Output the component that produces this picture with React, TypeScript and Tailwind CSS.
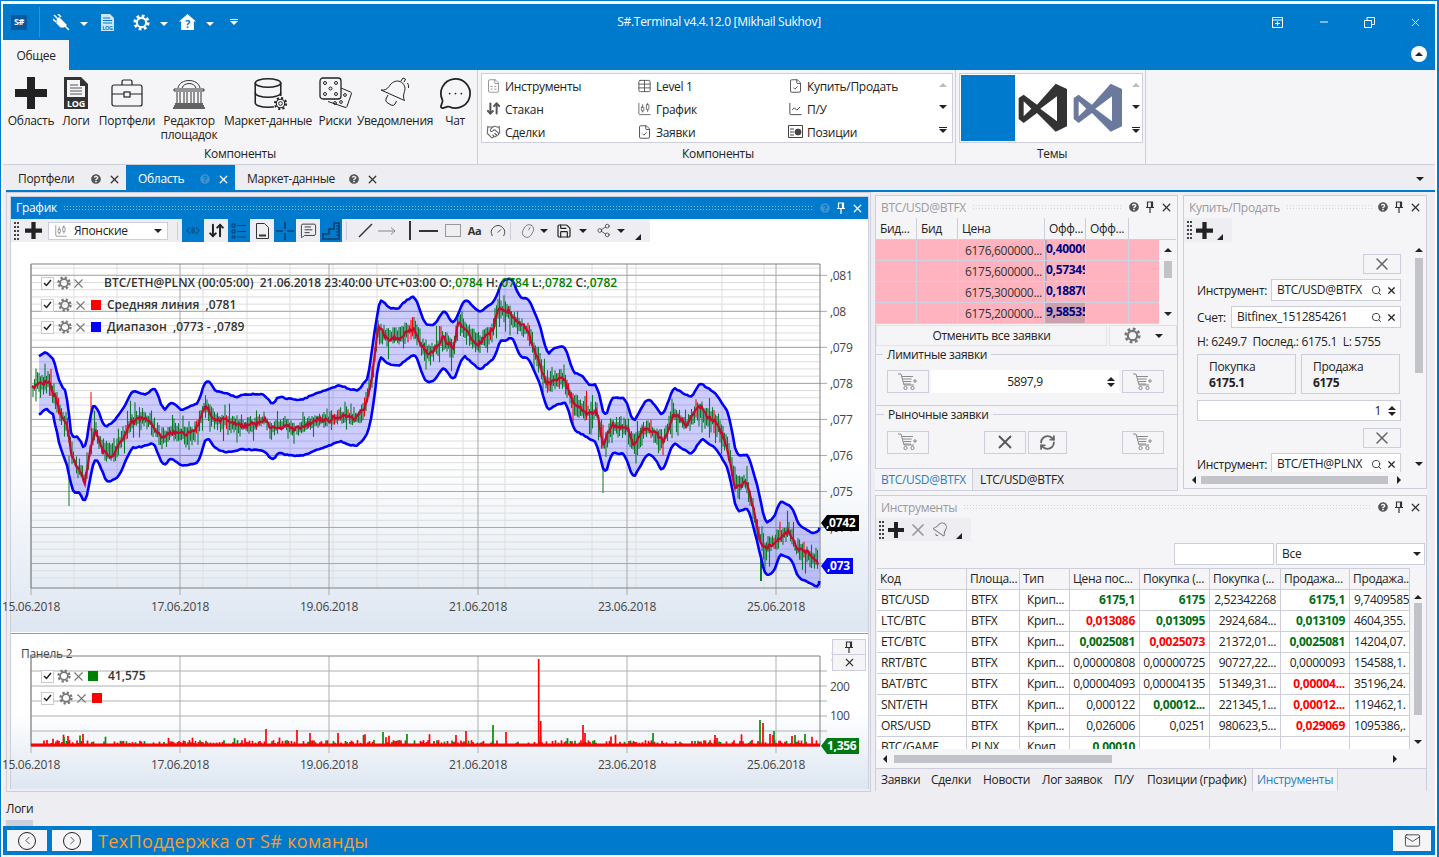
import {
  ArrowDownUp,
  Bell,
  ChartCandlestick,
  ChartLine,
  ChevronLeft,
  ChevronRight,
  Database,
  FileCheck,
  FileSpreadsheet,
  Gauge,
  Handshake,
  Mail,
  MessageCircleMore,
  MessageSquareText,
  Minus,
  Mouse,
  RefreshCw,
  Save,
  Search,
  Share2,
  Table,
  X,
} from 'lucide-react';
import { FaQuestionCircle } from 'react-icons/fa';
import type { ReactNode } from 'react';

const BLUE = '#007acc';

// chart outlines were read from 3x crops: [crop x, crop y, ...], origin per crop
const fromCrop = (ox: number, oy: number, p: number[]) => {
  const out: [number, number][] = [];
  for (let i = 0; i < p.length; i += 2) out.push([ox + p[i] / 3, oy + p[i + 1] / 3]);
  return out;
};

const upperRaw = [
  ...fromCrop(25, 255, [42, 305, 55, 290, 68, 290, 90, 318, 100, 370, 115, 400, 128, 408, 135, 545, 150, 540, 165, 548, 180, 590, 200, 450, 215, 450, 238, 515, 265, 498, 300, 450, 322, 403, 365, 417, 390, 392, 415, 465, 440, 437, 470, 463, 520, 440, 540, 375, 555, 375, 570, 405, 600, 410, 635, 425, 650, 415, 715, 415, 745, 447, 760, 420, 785, 428, 830, 432, 855, 420, 895, 405, 945, 387, 975, 400, 1000, 403, 1030, 365, 1045, 250, 1065, 125, 1090, 155, 1120, 160, 1140, 135, 1170, 120, 1200, 205]),
  ...fromCrop(430, 255, [0, 208, 15, 205, 42, 160, 70, 205, 105, 127, 150, 170, 175, 150, 195, 135, 215, 75, 245, 65, 270, 125, 298, 130, 330, 210, 352, 295, 380, 272, 405, 270, 430, 350, 455, 358, 480, 390, 500, 385, 525, 490, 545, 425, 585, 425, 610, 500, 650, 428, 670, 440, 698, 482, 730, 395, 785, 425, 810, 380, 860, 415, 895, 470, 920, 600, 955, 595, 985, 700, 1005, 800, 1030, 790, 1050, 735, 1085, 750, 1105, 805, 1145, 832, 1165, 830, 1168, 815]),
];

const lowerRaw = [
  ...fromCrop(25, 255, [42, 480, 62, 457, 90, 480, 95, 540, 130, 640, 140, 700, 155, 715, 165, 705, 180, 750, 195, 670, 210, 600, 230, 640, 245, 680, 280, 665, 320, 575, 350, 573, 385, 560, 415, 630, 440, 605, 470, 630, 520, 620, 545, 540, 570, 575, 600, 590, 650, 580, 715, 583, 745, 615, 760, 590, 785, 597, 830, 600, 855, 590, 895, 575, 945, 555, 975, 568, 1000, 568, 1030, 530, 1045, 450, 1062, 300, 1090, 325, 1120, 330, 1170, 292, 1200, 375]),
  ...fromCrop(430, 255, [0, 380, 15, 370, 42, 333, 70, 375, 100, 297, 150, 343, 175, 320, 195, 305, 210, 250, 230, 255, 245, 240, 270, 300, 298, 310, 330, 385, 352, 465, 380, 445, 410, 440, 430, 520, 465, 540, 500, 560, 525, 660, 545, 590, 585, 595, 610, 668, 650, 595, 670, 600, 698, 648, 730, 560, 785, 595, 815, 547, 860, 580, 895, 640, 920, 767, 955, 755, 985, 870, 1005, 960, 1030, 950, 1050, 893, 1085, 910, 1105, 965, 1145, 985, 1165, 995, 1168, 975]),
];

const middle = [
  ...fromCrop(25, 255, [20, 400, 40, 380, 70, 380, 90, 420, 105, 470, 125, 500, 140, 600, 160, 640, 180, 670, 195, 580, 210, 525, 240, 590, 265, 595, 290, 555, 320, 495, 370, 490, 395, 530, 410, 550, 440, 525, 480, 540, 510, 530, 540, 450, 570, 490, 620, 500, 680, 510, 720, 490, 740, 520, 770, 505, 820, 520, 860, 500, 905, 490, 960, 475, 990, 490, 1020, 450, 1040, 370, 1060, 220, 1085, 245, 1130, 245, 1165, 210, 1190, 270, 1210, 295]),
  ...fromCrop(430, 255, [0, 295, 40, 250, 70, 285, 85, 200, 145, 265, 190, 220, 205, 160, 235, 165, 260, 205, 295, 225, 320, 300, 350, 385, 395, 355, 430, 440, 470, 470, 500, 470, 520, 570, 545, 510, 590, 515, 610, 570, 650, 515, 700, 555, 730, 475, 770, 505, 805, 455, 860, 505, 890, 560, 915, 680, 950, 680, 990, 850, 1010, 880, 1050, 840, 1075, 820, 1100, 880, 1165, 915]),
];

const toPoints = (p: [number, number][]) => p.map(([x, y]) => `${x.toFixed(1)},${y.toFixed(1)}`).join(' ');

const yAt = (p: [number, number][], x: number) => {
  for (let i = 1; i < p.length; i++) {
    if (x <= p[i][0]) {
      const t = (x - p[i - 1][0]) / Math.max(p[i][0] - p[i - 1][0], 0.01);
      return p[i - 1][1] + t * (p[i][1] - p[i - 1][1]);
    }
  }
  return p[p.length - 1][1];
};

// resample, average a little and wobble so the band looks like a computed indicator
const smooth = (p: [number, number][], seed: number) => {
  const rnd = seeded(seed);
  const out: [number, number][] = [];
  const first = p[0][0];
  const last = p[p.length - 1][0];
  for (let x = first; x <= last; x += 2) {
    const a = yAt(p, Math.max(x - 1.5, first));
    const b = yAt(p, Math.min(x + 1.5, last));
    out.push([x, (a + b) / 2 + (rnd() - 0.5) * 1.1]);
  }
  out.push([last, p[p.length - 1][1]]);
  return out;
};

function seeded(s: number) {
  return () => {
    s = (s * 16807) % 2147483647;
    return s / 2147483647;
  };
}

const upper = smooth(upperRaw, 31);
const lower = smooth(lowerRaw, 77);

const candles = (() => {
  const rnd = seeded(4711);
  const out: { x: number; a: number; b: number; c: string }[] = [];
  for (let x = 33; x < 819; x += 1.5) {
    const y = yAt(middle, x);
    const calm = x > 240 && x < 360 ? 0.7 : 1;
    const a = (3 + rnd() * 9 * (rnd() > 0.75 ? 2.2 : 1)) * calm;
    const b = (3 + rnd() * 9 * (rnd() > 0.75 ? 2.2 : 1)) * calm;
    out.push({ x, a: y - a, b: y + b, c: rnd() > 0.1 ? '#0b7a2a' : '#ff0000' });
  }
  return out;
})();

const midNoisy = (() => {
  const rnd = seeded(99);
  const out: [number, number][] = [];
  let drift = 0;
  for (let x = 32; x < 819; x += 1.2) {
    drift = drift * 0.8 + (rnd() - 0.5) * 3;
    out.push([x, yAt(middle, x) + drift + (rnd() - 0.5) * 3]);
  }
  return out;
})();

const volBars = (() => {
  const rnd = seeded(2024);
  const out: { x: number; top: number; c: string }[] = [];
  for (let x = 32; x < 819; x += 1.5) {
    const r = rnd();
    const h = r > 0.96 ? 5 + rnd() * 5 : r > 0.45 ? 1 + rnd() * 3 : 0;
    if (h > 0) out.push({ x, top: 743 - h, c: rnd() > 0.72 ? '#0a8a0a' : '#ff0000' });
  }
  const spikes: [number, number, string][] = [
    [538.7, 658, '#ff0000'], [540.7, 720, '#ff0000'], [493, 724, '#0a8a0a'], [506, 731, '#ff0000'], [456, 734, '#ff0000'],
    [466, 730, '#ff0000'], [583, 724, '#ff0000'], [585, 732, '#ff0000'], [653, 732, '#0a8a0a'], [760, 719, '#0a8a0a'],
    [763, 722, '#ff0000'], [774, 730, '#0a8a0a'], [792, 735, '#ff0000'], [795, 734, '#0a8a0a'], [805, 733, '#0a8a0a'],
    [266, 728, '#ff0000'], [297, 729, '#ff0000'], [310, 732, '#ff0000'], [338, 732, '#ff0000'], [83, 733, '#ff0000'],
    [383, 731, '#0a8a0a'], [64, 736, '#0a8a0a'], [68, 735, '#ff0000'], [715, 734, '#ff0000'], [717, 737, '#ff0000'],
  ];
  spikes.forEach(([x, top, c]) => out.push({ x, top, c }));
  return out;
})();

const dateTicks = [
  [31, '15.06.2018'],
  [180, '17.06.2018'],
  [329, '19.06.2018'],
  [478, '21.06.2018'],
  [627, '23.06.2018'],
  [776, '25.06.2018'],
] as const;

const minorX = [74, 117, 203, 247, 290, 333, 377, 418, 463, 505, 592, 636, 722, 764];

function Caret({ color = 'border-t-[#222]' }: { color?: string }) {
  return <span className={`inline-block h-0 w-0 border-x-4 border-t-4 border-x-transparent ${color}`} />;
}

function CaretUp({ muted }: { muted?: boolean }) {
  return <span className={`inline-block h-0 w-0 border-x-4 border-b-4 border-x-transparent ${muted ? 'border-b-[#bbb]' : 'border-b-[#222]'}`} />;
}

function Grip({ h = 'h-[18px]' }: { h?: string }) {
  return <span className={`ml-[3px] w-[5px] shrink-0 border-x-2 border-dotted border-[#444] ${h}`} />;
}

function Corner({ cls = '' }: { cls?: string }) {
  return <span className={`h-0 w-0 self-end border-b-[6px] border-l-[6px] border-b-[#222] border-l-transparent ${cls}`} />;
}

function PlusIcon({ size = 18 }: { size?: number }) {
  return (
    <svg width={size} height={size} viewBox="0 0 16 16" className="shrink-0">
      <path d="M6 0h4v6h6v4h-6v6H6v-6H0V6h6z" fill="#222" />
    </svg>
  );
}

function Pin({ color = '#333' }: { color?: string }) {
  return (
    <svg width="8" height="12" viewBox="0 0 8 12" fill="none" stroke={color} strokeWidth="1.2">
      <path d="M1.5 1h5v5.5h-5zM5.5 1v5.5M0 6.5h8M4 6.5V12" />
    </svg>
  );
}

// chunky cog: ring plus dashed ring for the teeth
function Gear({ size = 15, color = '#777' }: { size?: number; color?: string }) {
  return (
    <svg width={size} height={size} viewBox="0 0 16 16" fill="none" stroke={color} className="shrink-0">
      <circle cx="8" cy="8" r="4.4" strokeWidth="2" />
      <circle cx="8" cy="8" r="6.3" strokeWidth="2.6" strokeDasharray="2.6 2.35" />
    </svg>
  );
}

function PanelHead({ title, active }: { title: string; active?: boolean }) {
  return (
    <div className={`flex h-[22px] shrink-0 items-center pr-[4px] pl-[5px] ${active ? 'bg-[#007acc] text-white' : 'text-[#9a9aa0]'}`}>
      <span className={active ? '' : 'pt-px'}>{title}</span>
      <span className={`mx-[6px] h-[6px] flex-1 bg-[length:3px_3px] ${active ? 'bg-[radial-gradient(#7cc0ea_1px,transparent_1px)]' : 'bg-[radial-gradient(#d4d5de_1px,transparent_1px)]'}`} />
      <FaQuestionCircle size={10} color={active ? '#3d93cf' : '#555'} className="mr-[7px]" />
      <span className="mr-[6px] flex"><Pin color={active ? '#fff' : '#333'} /></span>
      <X size={13} strokeWidth={2.4} color={active ? '#fff' : '#333'} />
    </div>
  );
}

function BigButton({ w, label, icon }: { w: string; label: ReactNode; icon: ReactNode }) {
  return (
    <div className={`flex shrink-0 flex-col items-center ${w}`}>
      <div className="flex h-[40px] items-center justify-center">{icon}</div>
      <div className="mt-px text-center leading-[14px] whitespace-nowrap">{label}</div>
    </div>
  );
}

function GalleryItem({ icon, label }: { icon: ReactNode; label: string }) {
  return (
    <div className="flex h-[23px] items-center gap-[4px]">
      <span className="flex w-[15px] justify-center text-[#666]">{icon}</span>
      <span className="pt-[2px]">{label}</span>
    </div>
  );
}

function ScrollArrows() {
  return (
    <div className="flex h-full flex-col items-center justify-between py-[9px]">
      <CaretUp muted />
      <Caret />
      <span className="flex flex-col items-center gap-[1px]">
        <span className="h-[1px] w-[8px] bg-[#222]" />
        <Caret />
      </span>
    </div>
  );
}

function VSLogo({ color }: { color: string }) {
  return (
    <svg width="50" height="50" viewBox="205 250 150 150">
      <path
        fill={color}
        fillRule="evenodd"
        d="M207 295 222 285 262 315 318 252 352 268V380L318 396 262 340 222 370 207 358ZM322 290 272 327 322 365ZM222 305V350L245 327Z"
      />
    </svg>
  );
}

function DocTab({ label, w, active }: { label: string; w: string; active?: boolean }) {
  return (
    <div className={`flex h-full items-center pl-[12px] ${w} ${active ? 'bg-[#007acc] text-white' : 'text-[#222]'}`}>
      <span className="flex-1 pt-[3px]">{label}</span>
      <FaQuestionCircle size={10} color={active ? '#3d93cf' : '#555'} className="mt-[3px] mr-[7px]" />
      <X size={13} strokeWidth={2.4} color={active ? '#fff' : '#333'} className="mt-[3px] mr-[5px]" />
    </div>
  );
}

function LegendBox() {
  return (
    <span className="flex h-[13px] w-[13px] shrink-0 items-center justify-center border border-[#c9cad8] bg-white">
      <svg width="9" height="8" viewBox="0 0 9 8" fill="none" stroke="#222" strokeWidth="1.5">
        <path d="M1 4l2.5 2.5L8 1" />
      </svg>
    </span>
  );
}

function LegendX() {
  return <X size={15} strokeWidth={1.7} color="#777" className="shrink-0" />;
}

function ToolBtn({ w, active, children }: { w: string; active?: boolean; children: ReactNode }) {
  return <span className={`flex h-[23px] shrink-0 items-center justify-center ${w} ${active ? 'bg-[#007acc]' : ''}`}>{children}</span>;
}

function Sep() {
  return <span className="mx-[4px] h-[18px] w-px shrink-0 bg-[#cccedb]" />;
}

function MainChart() {
  const majors = Array.from({ length: 9 }, (_, i) => 274.3 + i * 36.03);
  const minors = Array.from({ length: 44 }, (_, i) => 267.1 + i * 7.206).filter(y => y < 587);
  const axis = [',081', ',08', ',079', ',078', ',077', ',076', ',075', ',074'];
  return (
    <svg viewBox="11 241 858 390" className="block h-[390px] w-[858px] overflow-visible">
      {minors.map(y => <line key={y} x1="31" x2="820" y1={y} y2={y} stroke="#dcdcdc" />)}
      {minorX.map(x => <line key={x} x1={x} x2={x} y1="263" y2="587" stroke="#dedede" />)}
      {majors.map(y => <line key={y} x1="31" x2="827" y1={y} y2={y} stroke="#a8a8a8" />)}
      {dateTicks.map(([x]) => <line key={x} x1={x} x2={x} y1="263" y2="594" stroke="#a8a8a8" />)}
      <path d="M31 263H820V587H31Z" fill="none" stroke="#808080" />
      <polygon points={toPoints([...upper, ...[...lower].reverse()])} fill="#0000ff" fillOpacity="0.2" />
      {candles.map(c => <line key={c.x} x1={c.x} x2={c.x} y1={c.a} y2={c.b} stroke={c.c} strokeWidth="1.1" />)}
      <line x1="69" x2="69" y1="455" y2="505" stroke="#0b7a2a" />
      <line x1="91" x2="91" y1="391" y2="430" stroke="#ff0000" />
      <line x1="603" x2="603" y1="465" y2="492" stroke="#0b7a2a" />
      <line x1="761" x2="761" y1="555" y2="580" stroke="#0b7a2a" strokeWidth="2" />
      <polyline points={toPoints(midNoisy)} fill="none" stroke="#c8082f" strokeWidth="2.2" />
      <polyline points={toPoints(upper)} fill="none" stroke="#0000ff" strokeWidth="2.6" strokeLinejoin="round" />
      <polyline points={toPoints(lower)} fill="none" stroke="#0000ff" strokeWidth="2.6" strokeLinejoin="round" />
      {axis.map((t, i) => <text key={t} x="830" y={majors[i] + 4.5} fontSize="12" fill="#444">{t}</text>)}
      {dateTicks.map(([x, t]) => <text key={x} x={x} y="610" textAnchor="middle" fontSize="12" fill="#444">{t}</text>)}
      <path d="M827 514H859V530H827L821 522Z" fill="#000" />
      <text x="826" y="526" fontSize="12" fontWeight="700" fill="#fff">,0742</text>
      <path d="M827 557H853V573H827L821 565Z" fill="#0000ff" />
      <text x="827" y="569" fontSize="12" fontWeight="700" fill="#fff">,073</text>
    </svg>
  );
}

function VolumeChart() {
  const lines = [670, 685, 700, 715, 730];
  return (
    <svg viewBox="11 634 858 154" className="block h-[154px] w-[858px] overflow-visible">
      <text x="21" y="657" fontSize="12" fill="#444">Панель 2</text>
      {lines.map(y => <line key={y} x1="31" x2="827" y1={y} y2={y} stroke="#b0b0b0" />)}
      {dateTicks.map(([x]) => <line key={x} x1={x} x2={x} y1="655" y2="752" stroke="#b0b0b0" />)}
      <path d="M31 655H820V745H31Z" fill="none" stroke="#808080" />
      {volBars.map((b, i) => <line key={i} x1={b.x} x2={b.x} y1={b.top} y2="745" stroke={b.c} strokeWidth="1.7" />)}
      <line x1="31" x2="820" y1="744" y2="744" stroke="#ff0000" strokeWidth="3" />
      <text x="831" y="660" fontSize="12" fill="#444">3</text>
      <text x="830" y="690" fontSize="12" fill="#444">200</text>
      <text x="830" y="719" fontSize="12" fill="#444">100</text>
      {dateTicks.map(([x, t]) => <text key={x} x={x} y="768" textAnchor="middle" fontSize="12" fill="#444">{t}</text>)}
      <path d="M827 737H859V753H827L821 745Z" fill="#007a10" />
      <text x="827" y="749" fontSize="12" fontWeight="700" fill="#fff">1,356</text>
    </svg>
  );
}

const orderRows = [
  ['6176,600000...', '0,40000', 'w-[2px]'],
  ['6175,600000...', '0,57349', 'w-[2px]'],
  ['6175,300000...', '0,18870', 'w-[1px]'],
  ['6175,200000...', '9,58535', 'w-full'],
];

function OrderBook() {
  return (
    <div className="flex shrink-0">
      <div className="flex w-[300px] flex-col">
        <div className="grid h-[22px] w-[300px] grid-cols-[41px_41px_87px_41px_43px_30px] items-center border-b border-[#cccedb]">
          {['Бид...', 'Бид', 'Цена', 'Офф...', 'Офф...', ''].map((t, i) => (
            <span key={i} className="flex h-full items-center border-r border-[#cccedb] pl-[4px] last:border-r-0">{t}</span>
          ))}
        </div>
        <div className="flex">
          <div className="w-[283px]">
            {orderRows.map(([price, vol, bar]) => (
              <div key={price} className="grid h-[21px] grid-cols-[41px_41px_87px_41px_43px_30px] border-b border-[#cfd2e0] bg-[#ffb3be]">
                <span className="border-r border-[#cfd2e0]" />
                <span className="border-r border-[#cfd2e0]" />
                <span className="truncate border-r border-[#cfd2e0] pt-[3px] pl-[7px] text-[#333]">{price}</span>
                <span className="relative overflow-hidden border-r border-[#cfd2e0] pt-px pl-[1px] font-bold whitespace-nowrap text-[#000080]">
                  <span className={`absolute inset-y-0 left-0 bg-[#9a8f9c]/50 ${bar}`} />
                  <span className="relative">{vol}</span>
                </span>
                <span className="border-r border-[#cfd2e0]" />
                <span />
              </div>
            ))}
          </div>
          <div className="flex w-[17px] flex-col items-center justify-between py-[8px]">
            <CaretUp />
            <span className="-mt-[26px] h-[17px] w-[8px] bg-[#c2c3c9]" />
            <Caret />
          </div>
        </div>
      </div>
    </div>
  );
}

function FlatBtn({ w, children }: { w: string; children: ReactNode }) {
  return <span className={`flex h-[23px] shrink-0 items-center justify-center border border-[#cccedb] ${w}`}>{children}</span>;
}

function Cart() {
  return (
    <svg width="21" height="18" viewBox="0 0 21 18" fill="none" stroke="#8a8a8a" strokeWidth="1">
      <path d="M0 1h3l3 11h10" />
      <path d="M4 3.5h11M4.7 6h9M5.3 8.5h8M6 11h7" />
      <circle cx="7.5" cy="15" r="1.6" />
      <circle cx="14.5" cy="15" r="1.6" />
      <path d="M17 6v4M15 8h4" />
    </svg>
  );
}

function BookPanel() {
  return (
    <div className="flex h-[296px] w-[303px] shrink-0 flex-col">
      <div className="flex flex-1 flex-col border-x border-t border-[#cccedb]">
        <PanelHead title="BTC/USD@BTFX" />
        <OrderBook />
        <div className="mt-[1px] flex h-[21px] gap-[2px]">
          <span className="flex w-[231px] items-center justify-center border border-[#e3e3ea]">Отменить все заявки</span>
          <span className="flex flex-1 items-center justify-center gap-[14px] border border-[#dfe0e8]">
            <Gear size={17} />
            <Caret />
          </span>
        </div>
        <div className="relative mt-[8px] flex h-[52px] items-center gap-[2px] border-y border-[#cccedb] px-[11px] pt-[3px]">
          <span className="absolute -top-[8px] left-[7px] bg-[#f5f5f8] px-[4px] leading-[16px]">Лимитные заявки</span>
          <FlatBtn w="w-[42px]"><Cart /></FlatBtn>
          <span className="relative flex h-[23px] w-[188px] items-center justify-center bg-white">
            5897,9
            <span className="absolute right-[4px] flex flex-col gap-[2px]"><CaretUp /><Caret /></span>
          </span>
          <FlatBtn w="ml-[1px] w-[42px]"><Cart /></FlatBtn>
        </div>
        <div className="relative mt-[8px] flex h-[52px] items-center border-t border-[#cccedb] px-[11px] pt-[3px]">
          <span className="absolute -top-[8px] left-[8px] bg-[#f5f5f8] px-[4px] leading-[16px]">Рыночные заявки</span>
          <FlatBtn w="w-[42px]"><Cart /></FlatBtn>
          <span className="ml-[55px] flex gap-[2px]">
            <FlatBtn w="w-[42px]"><X size={22} strokeWidth={2} color="#555" /></FlatBtn>
            <FlatBtn w="w-[39px]"><RefreshCw size={17} strokeWidth={2.6} color="#666" /></FlatBtn>
          </span>
          <FlatBtn w="ml-[55px] w-[42px]"><Cart /></FlatBtn>
        </div>
      </div>
      <div className="flex h-[23px] shrink-0 border-y border-r border-[#cccedb] bg-[#eeeef2]">
        <span className="flex w-[97px] items-center justify-center bg-[#f5f5f8] text-[#2a7fc1]">BTC/USD@BTFX</span>
        <span className="flex items-center border-l border-[#cccedb] px-[7px]">LTC/USD@BTFX</span>
      </div>
    </div>
  );
}

function LookupInput({ w, value }: { w: string; value: string }) {
  return (
    <span className={`flex h-[22px] items-center border border-[#cccedb] bg-white pr-[3px] pl-[5px] ${w}`}>
      <span className="flex-1 whitespace-nowrap">{value}</span>
      <Search size={11} strokeWidth={2} className="mr-[4px] shrink-0 text-[#333]" />
      <X size={11} strokeWidth={2.6} className="shrink-0 text-[#222]" />
    </span>
  );
}

function CloseRow() {
  return (
    <div className="flex justify-end">
      <span className="flex h-[20px] w-[38px] items-center justify-center border border-[#cccedb]">
        <X size={20} strokeWidth={1.8} color="#666" />
      </span>
    </div>
  );
}

function BuySellPanel() {
  return (
    <div className="ml-[5px] flex h-[294px] w-[244px] shrink-0 flex-col border border-[#cccedb]">
      <PanelHead title="Купить/Продать" />
      <div className="flex h-[24px] w-[48px] shrink-0 items-center gap-[4px] bg-[#eeeef2]">
        <Grip />
        <PlusIcon size={17} />
        <Corner cls="mb-[2px]" />
      </div>
      <div className="flex min-h-0 flex-1">
        <div className="min-h-0 flex-1 overflow-hidden pt-[12px] pr-[10px] pl-[13px]">
          <CloseRow />
          <div className="mt-[5px] flex items-center justify-between">
            <span className="pt-[2px]">Инструмент:</span>
            <LookupInput w="w-[130px]" value="BTC/USD@BTFX" />
          </div>
          <div className="mt-[5px] flex items-center justify-between">
            <span className="pt-[2px]">Счет:</span>
            <LookupInput w="w-[170px]" value="Bitfinex_1512854261" />
          </div>
          <div className="mt-[6px] h-[16px] leading-[16px] whitespace-pre">H: 6249.7  Послед.: 6175.1  L: 5755</div>
          <div className="mt-[4px] flex gap-[5px]">
            <div className="h-[40px] w-[99px] border border-[#cccedb] pt-[4px] pl-[11px]">Покупка<div className="font-bold">6175.1</div></div>
            <div className="h-[40px] w-[99px] border border-[#cccedb] pt-[4px] pl-[11px]">Продажа<div className="font-bold">6175</div></div>
          </div>
          <div className="mt-[6px] flex h-[21px] items-center justify-end gap-[7px] border border-[#cccedb] bg-white pr-[4px]">
            1
            <span className="flex flex-col gap-[2px]"><CaretUp /><Caret /></span>
          </div>
          <div className="mt-[7px]"><CloseRow /></div>
          <div className="mt-[5px] flex items-center justify-between">
            <span className="pt-[2px]">Инструмент:</span>
            <LookupInput w="w-[130px]" value="BTC/ETH@PLNX" />
          </div>
        </div>
        <div className="flex w-[15px] shrink-0 flex-col items-center py-[6px]">
          <CaretUp />
          <span className="mt-[6px] h-[115px] w-[8px] bg-[#c2c3c9]" />
          <span className="flex-1" />
          <Caret />
        </div>
      </div>
      <div className="flex h-[16px] shrink-0 items-center px-[8px]">
        <span className="h-0 w-0 border-y-4 border-r-4 border-y-transparent border-r-[#222]" />
        <span className="ml-[5px] h-[8px] w-[187px] bg-[#c2c3c9]" />
        <span className="ml-[9px] h-0 w-0 border-y-4 border-l-4 border-y-transparent border-l-[#222]" />
      </div>
    </div>
  );
}

const g = 'font-bold text-[#006e12]';
const r = 'font-bold text-[#ff0000]';

const instruments: [string, string, [string, string], [string, string], string, [string, string], string][] = [
  ['BTC/USD', 'BTFX', ['6175,1', g], ['6175', g], '2,52342268', ['6175,1', g], '9,7409585'],
  ['LTC/BTC', 'BTFX', ['0,013086', r], ['0,013095', g], '2924,684...', ['0,013109', g], '4604,355.'],
  ['ETC/BTC', 'BTFX', ['0,0025081', g], ['0,0025073', r], '21372,01...', ['0,0025081', g], '14204,07.'],
  ['RRT/BTC', 'BTFX', ['0,00000808', ''], ['0,00000725', ''], '90727,22...', ['0,0000093', ''], '154588,1.'],
  ['BAT/BTC', 'BTFX', ['0,00004093', ''], ['0,00004135', ''], '51349,31...', ['0,00004...', r], '35196,24.'],
  ['SNT/ETH', 'BTFX', ['0,000122', ''], ['0,00012...', g], '221345,1...', ['0,00012...', r], '119462,1.'],
  ['ORS/USD', 'BTFX', ['0,026006', ''], ['0,0251', ''], '980623,5...', ['0,029069', r], '1095386,.'],
  ['BTC/GAME', 'PLNX', ['0,00010', g], ['', ''], '', ['', ''], ''],
];

const instCols = 'grid grid-cols-[90px_53px_50px_70px_70px_71px_69px_60px]';

function InstrumentsPanel() {
  const cell = 'overflow-hidden whitespace-nowrap border-r border-b border-[#cccedb] flex items-center';
  return (
    <div className="mt-[4px] flex h-[296px] w-[552px] shrink-0 flex-col border-x border-t border-[#cccedb]">
      <PanelHead title="Инструменты" />
      <div className="flex h-[23px] w-[95px] shrink-0 items-center gap-[4px] bg-[#eeeef2]">
        <Grip />
        <PlusIcon size={16} />
        <X size={20} strokeWidth={2} color="#999" />
        <Bell size={17} strokeWidth={1.3} color="#777" className="rotate-[35deg]" />
        <Corner cls="mb-[2px] ml-[3px]" />
      </div>
      <div className="mt-[2px] flex h-[22px] shrink-0 justify-end gap-[2px] pr-[1px]">
        <span className="w-[100px] border border-[#cccedb] bg-white" />
        <span className="flex w-[149px] items-center justify-between border border-[#cccedb] bg-white pr-[3px] pl-[5px]">Все<Caret /></span>
      </div>
      <div className={`mt-[3px] ml-px h-[22px] w-[533px] shrink-0 border-t border-[#cccedb] ${instCols}`}>
        {['Код', 'Площа...', 'Тип', 'Цена пос...', 'Покупка (...', 'Покупка (...', 'Продажа...', 'Продажа...'].map((t, i) => (
          <span key={i} className={`${cell} pl-[3px]`}>{t}</span>
        ))}
      </div>
      <div className="ml-px flex h-[159px] shrink-0 overflow-hidden">
        <div className="w-[533px]">
          {instruments.map(row => (
            <div key={row[0]} className={`h-[21px] bg-white ${instCols}`}>
              <span className={`${cell} pl-[4px]`}>{row[0]}</span>
              <span className={`${cell} pl-[4px]`}>{row[1]}</span>
              <span className={`${cell} pl-[7px]`}>Крип...</span>
              <span className={`${cell} justify-end pr-[4px] ${row[2][1]}`}>{row[2][0]}</span>
              <span className={`${cell} justify-end pr-[4px] ${row[3][1]}`}>{row[3][0]}</span>
              <span className={`${cell} justify-end pr-[4px]`}>{row[4]}</span>
              <span className={`${cell} justify-end pr-[4px] ${row[5][1]}`}>{row[5][0]}</span>
              <span className={`${cell} pl-[4px]`}>{row[6]}</span>
            </div>
          ))}
        </div>
        <div className="flex w-[16px] flex-col items-center py-[5px]">
          <CaretUp />
          <span className="mt-[4px] h-[112px] w-[8px] bg-[#c2c3c9]" />
          <span className="flex-1" />
          <Caret />
        </div>
      </div>
      <div className="flex h-[19px] shrink-0 items-center px-[7px]">
        <span className="h-0 w-0 border-y-4 border-r-4 border-y-transparent border-r-[#222]" />
        <span className="ml-[7px] h-[8px] w-[218px] bg-[#c2c3c9]" />
        <span className="mr-[22px] ml-auto h-0 w-0 border-y-4 border-l-4 border-y-transparent border-l-[#222]" />
      </div>
      <div className="flex h-[23px] shrink-0 items-center border-t border-[#cccedb] bg-[#eeeef2] pl-[5px]">
        <span className="w-[50px]">Заявки</span>
        <span className="w-[52px]">Сделки</span>
        <span className="w-[59px]">Новости</span>
        <span className="w-[72px]">Лог заявок</span>
        <span className="w-[33px]">П/У</span>
        <span className="w-[105px]">Позиции (график)</span>
        <span className="flex h-full w-[86px] items-center justify-center border-x border-[#cccedb] bg-[#f5f5f8] text-[#2a7fc1]">Инструменты</span>
      </div>
    </div>
  );
}

function SmallDoc() {
  return <FileCheck size={16} strokeWidth={1.4} color="#444" />;
}

export default function App() {
  return (
    <div className="flex h-[857px] w-[1439px] flex-col overflow-hidden border-t border-r-2 border-l border-[#007acc] bg-white pt-[3px] pr-[2px] pl-[2px] font-['Open_Sans',sans-serif] text-[12px] leading-[16px] tracking-[-0.3px] text-[#222]">
      {/* title + tab strip */}
      <div className="h-[66px] shrink-0 bg-[#007acc]">
        <div className="grid h-[36px] grid-cols-[1fr_auto_1fr] items-center">
          <div className="flex items-center">
            <span className="ml-[8px] flex h-[15px] w-[16px] items-center justify-center bg-[#045a9e] text-[9px] font-bold text-white">S#</span>
            <span className="ml-[12px] h-[30px] w-px bg-[#2f93d6]" />
            <svg width="17" height="17" viewBox="0 0 17 17" className="ml-[13px]">
              <path d="M1 1l15 15" stroke="#fff" strokeWidth="1.4" />
              <path d="M6 3l8 8-3 2.5H7.5L3.5 9.5V6z" fill="#fff" />
              <path d="M3 8L0 5M8 3L5 0" stroke="#fff" strokeWidth="1.6" />
            </svg>
            <span className="ml-[10px]"><Caret color="border-t-white" /></span>
            <svg width="13" height="17" viewBox="0 0 13 17" className="ml-[13px]">
              <path d="M0 0h9l4 4v13H0z" fill="#cfe6f6" />
              <path d="M2 4h7M2 6.5h9M2 9h9" stroke={BLUE} />
              <text x="6.5" y="15.5" textAnchor="middle" fontSize="5.5" fontWeight="700" fill={BLUE}>LOG</text>
            </svg>
            <span className="ml-[19px]"><Gear size={17} color="#fff" /></span>
            <span className="ml-[10px]"><Caret color="border-t-white" /></span>
            <svg width="17" height="16" viewBox="0 0 16 15" className="ml-[11px]">
              <path d="M8 0l8 7h-2v8H2V7H0z" fill="#fff" />
              <text x="8" y="13" textAnchor="middle" fontSize="10" fontWeight="700" fill={BLUE}>?</text>
            </svg>
            <span className="ml-[10px]"><Caret color="border-t-white" /></span>
            <span className="ml-[16px] flex flex-col items-center gap-[1px]">
              <span className="h-px w-[8px] bg-white" />
              <Caret color="border-t-white" />
            </span>
          </div>
          <span className="text-white">S#.Terminal v4.4.12.0 [Mikhail Sukhov]</span>
          <div className="flex items-center justify-end">
            <svg width="11" height="11" viewBox="0 0 11 11" fill="none" stroke="#fff">
              <path d="M.5.5h10v10H.5zM.5 3h10" />
              <path d="M3 6.5h5M5.5 4.5v4" strokeWidth="1.2" />
            </svg>
            <Minus size={12} strokeWidth={2} color="#fff" className="ml-[35px]" />
            <svg width="11" height="11" viewBox="0 0 11 11" fill="none" stroke="#fff" className="ml-[34px]">
              <path d="M.5 3.5h7v7h-7zM3 3.5v-3h7.5v7h-3" />
            </svg>
            <X size={13} strokeWidth={1.6} color="#fff" className="mr-[13px] ml-[34px]" />
          </div>
        </div>
        <div className="flex h-[30px] items-end justify-between">
          <span className="flex h-[30px] w-[66px] items-center justify-center bg-[#f5f5f8] pt-[2px]">Общее</span>
          <span className="mr-[8px] mb-[8px] flex h-[16px] w-[16px] items-center justify-center rounded-full bg-white">
            <CaretUp />
          </span>
        </div>
      </div>

      {/* ribbon */}
      <div className="flex h-[95px] shrink-0 border-b border-[#cccedb] bg-[#f5f5f8]">
        <div className="flex w-[475px] shrink-0 flex-col border-r border-[#cccedb]">
          <div className="flex h-[74px] pt-[3px] pl-[5px]">
            <BigButton w="w-[46px]" label="Область" icon={<PlusIcon size={32} />} />
            <BigButton
              w="w-[44px]"
              label="Логи"
              icon={
                <svg width="24" height="32" viewBox="0 0 24 32">
                  <path d="M0 0h17l7 7v25H0z" fill="#333" />
                  <path d="M3 3h13v6h5v11H3z" fill="#f5f5f8" />
                  <path d="M6 8h8M6 11h12M6 14h12M6 17h12" stroke="#555" />
                  <text x="12" y="29.5" textAnchor="middle" fontSize="9" fontWeight="700" fill="#fff">LOG</text>
                </svg>
              }
            />
            <BigButton
              w="w-[58px]"
              label="Портфели"
              icon={
                <svg width="32" height="28" viewBox="0 0 32 28" fill="none" stroke="#222" strokeWidth="1.2">
                  <rect x="1" y="6" width="30" height="21" rx="2" />
                  <path d="M11 6V2.5A1.5 1.5 0 0 1 12.5 1h7A1.5 1.5 0 0 1 21 2.5V6M1 15h12M19 15h12" />
                  <rect x="13" y="13" width="6" height="5" />
                </svg>
              }
            />
            <BigButton
              w="w-[66px]"
              label={<>Редактор<br />площадок</>}
              icon={
                <svg width="32" height="32" viewBox="0 0 32 32" fill="none" stroke="#333">
                  <path d="M5 11C7 1 25 1 27 11M9 11C11 5 21 5 23 11M1 12h30v2H1z" />
                  <path d="M4 15v11M7 15v11M11 15v11M14 15v11M18 15v11M21 15v11M25 15v11M28 15v11" />
                  <path d="M2 27h28M1 29h30M0 31h32" strokeWidth="1.4" />
                </svg>
              }
            />
            <BigButton
              w="w-[92px]"
              label="Маркет-данные"
              icon={
                <span className="relative flex">
                  <Database size={34} strokeWidth={1.1} color="#222" />
                  <span className="absolute -right-[3px] -bottom-px flex rounded-full bg-[#f5f5f8]">
                    <svg width="15" height="15" viewBox="0 0 16 16" fill="none" stroke="#222">
                      <circle cx="8" cy="8" r="4.5" strokeWidth="1.2" />
                      <circle cx="8" cy="8" r="2" strokeWidth="1" />
                      <circle cx="8" cy="8" r="6" strokeWidth="2" strokeDasharray="2.3 2.4" />
                    </svg>
                  </span>
                </span>
              }
            />
            <BigButton
              w="w-[42px]"
              label="Риски"
              icon={
                <svg width="33" height="32" viewBox="0 0 33 32" fill="none" stroke="#222" strokeWidth="1">
                  <path d="M22 11l9.5 4a1.5 1.5 0 0 1 .8 2L28 29.5a1.5 1.5 0 0 1-2 .8L9 24.5" />
                  <rect x="1" y="1" width="21" height="21" rx="3" strokeWidth="1.3" />
                  <circle cx="6" cy="6" r="1.5" />
                  <circle cx="17" cy="6" r="1.5" />
                  <circle cx="11.5" cy="11.5" r="1.5" />
                  <circle cx="6" cy="17" r="1.5" />
                  <circle cx="17" cy="17" r="1.5" />
                  <circle cx="26" cy="18" r="1.4" />
                  <circle cx="22" cy="25" r="1.4" />
                  <circle cx="16" cy="26" r="1.4" />
                </svg>
              }
            />
            <BigButton
              w="w-[78px]"
              label="Уведомления"
              icon={
                <svg width="34" height="34" viewBox="0 0 34 34" fill="none" stroke="#222" strokeWidth="1">
                  <path d="M22 5.5c4 1.5 6 6 4.5 10-1 3-1.5 6 0 9L3 14c3.5.5 6-.7 8-3.5 2.5-4 6.5-6.5 11-5z" />
                  <path d="M10 19l-2 4a3 3 0 0 0 1 3.5l4 2.5a3 3 0 0 0 4-1l1.5-3" />
                  <path d="M23 5l2-3 2.5 1.2-1.5 3M29.5 7a6 6 0 0 1 1 5" />
                </svg>
              }
            />
            <BigButton w="w-[42px]" label="Чат" icon={<MessageCircleMore size={35} strokeWidth={1.2} color="#222" />} />
          </div>
          <div className="mt-auto mb-[2px] text-center">Компоненты</div>
        </div>
        <div className="flex w-[478px] shrink-0 flex-col border-r border-[#cccedb] pt-[3px] pl-[3px]">
          <div className="flex h-[70px] w-[472px] items-stretch border border-[#cccedb] bg-white pl-[4px]">
            <div className="grid flex-1 grid-cols-[151px_151px_1fr]">
              <GalleryItem icon={<FileSpreadsheet size={16} strokeWidth={1.2} color="#777" />} label="Инструменты" />
              <GalleryItem icon={<Table size={16} strokeWidth={1.3} color="#444" />} label="Level 1" />
              <GalleryItem icon={<SmallDoc />} label="Купить/Продать" />
              <GalleryItem icon={<ArrowDownUp size={17} strokeWidth={3.2} color="#555" />} label="Стакан" />
              <GalleryItem icon={<ChartCandlestick size={16} strokeWidth={1.3} color="#555" />} label="График" />
              <GalleryItem icon={<ChartLine size={16} strokeWidth={1.4} color="#333" />} label="П/У" />
              <GalleryItem icon={<Handshake size={16} strokeWidth={1.7} color="#666" />} label="Сделки" />
              <GalleryItem icon={<SmallDoc />} label="Заявки" />
              <GalleryItem
                icon={
                  <svg width="15" height="13" viewBox="0 0 15 13" fill="none" stroke="#444">
                    <path d="M.5.5h14v12H.5zM2 4h4M2 7h4M2 10h4" />
                    <circle cx="10" cy="7" r="3" fill="#444" />
                  </svg>
                }
                label="Позиции"
              />
            </div>
            <div className="w-[18px]"><ScrollArrows /></div>
          </div>
          <div className="mt-auto mb-[2px] text-center">Компоненты</div>
        </div>
        <div className="flex w-[190px] shrink-0 flex-col border-r border-[#cccedb] pt-[3px] pl-[3px]">
          <div className="flex h-[70px] w-[184px] items-center border border-[#cccedb] bg-white pl-px">
            <span className="h-[66px] w-[54px] bg-[#007acc]" />
            <span className="ml-[3px] flex"><VSLogo color="#333" /></span>
            <span className="ml-[5px] flex"><VSLogo color="#6b7a9c" /></span>
            <div className="ml-[6px] h-full flex-1"><ScrollArrows /></div>
          </div>
          <div className="mt-auto mb-[2px] text-center">Темы</div>
        </div>
      </div>

      {/* document tabs */}
      <div className="flex h-[25px] shrink-0 items-stretch bg-[#eeeef2] pl-[3px]">
        <DocTab w="w-[120px]" label="Портфели" />
        <DocTab w="w-[109px]" label="Область" active />
        <DocTab w="w-[149px]" label="Маркет-данные" />
        <span className="ml-auto flex items-center pt-[3px] pr-[11px]"><Caret /></span>
      </div>
      <div className="ml-[3px] h-[2px] shrink-0 bg-[#007acc]" />

      {/* docked panels */}
      <div className="flex h-[603px] shrink-0 bg-[#eeeef2] pl-[3px]">
        <div className="h-[600px] w-[865px] shrink-0 border border-[#cccedb] py-[3px] pr-px pl-[3px]">
          <div className="flex h-[593px] flex-col border border-[#cccedb] bg-white">
            <PanelHead title="График" active />
            <div className="flex h-[23px] w-[639px] shrink-0 items-center bg-[#eeeef2]">
              <Grip />
              <ToolBtn w="ml-[5px] w-[18px]"><PlusIcon size={17} /></ToolBtn>
              <span className="ml-[6px] flex h-[18px] w-[120px] items-center border border-[#cccedb] bg-white pr-[5px] pl-[5px]">
                <ChartCandlestick size={14} strokeWidth={1.2} color="#777" />
                <span className="ml-[6px] flex-1">Японские</span>
                <Caret />
              </span>
              <span className="mx-[4px] ml-[9px] h-[18px] w-px bg-[#cccedb]" />
              <ToolBtn w="w-[22px]" active>
                <svg width="14" height="7" viewBox="0 0 14 7" fill="none" stroke="#0a3e6e"><path d="M4 .5L.8 3.5 4 6.5M6 .5v6M10 .5l3.2 3-3.2 3M8 .5v6" /></svg>
              </ToolBtn>
              <ToolBtn w="ml-[3px] w-[18px]"><ArrowDownUp size={17} strokeWidth={2.8} color="#222" /></ToolBtn>
              <ToolBtn w="ml-[3px] w-[22px]" active>
                <svg width="16" height="16" viewBox="0 0 16 16" fill="none" stroke="#0a3e6e"><path d="M1 1h3v3H1zM1 7h3v3H1zM1 13h3v2H1zM6 2.5h9M6 8.5h9M6 14h9" /></svg>
              </ToolBtn>
              <ToolBtn w="ml-[4px] w-[17px]">
                <svg width="13" height="16" viewBox="0 0 13 16" fill="none" stroke="#333"><path d="M.5.5h8l4 4v11H.5z" /><path d="M3 12.5h7" strokeWidth="2" /></svg>
              </ToolBtn>
              <ToolBtn w="ml-[3px] w-[22px]" active>
                <svg width="18" height="18" viewBox="0 0 18 18" stroke="#0a3e6e" strokeWidth="1.4"><path d="M9 0v7M9 11v7M0 9h7M11 9h7" /></svg>
              </ToolBtn>
              <ToolBtn w="ml-[3px] w-[18px]"><MessageSquareText size={17} strokeWidth={1.3} color="#333" /></ToolBtn>
              <ToolBtn w="ml-[3px] w-[22px]" active>
                <svg width="18" height="18" viewBox="0 0 18 18" fill="none" stroke="#0a3e6e" strokeWidth="1.5"><path d="M1 17V12h6V7h5V1h5v16z" /><path d="M14 4h3M14 7h3M14 10h3M14 13h3" strokeWidth="1" /></svg>
              </ToolBtn>
              <Sep />
              <ToolBtn w="ml-[5px] w-[18px]">
                <svg width="15" height="15" viewBox="0 0 15 15" stroke="#333" strokeWidth="1.4"><path d="M1 14L14 1" /></svg>
              </ToolBtn>
              <ToolBtn w="ml-[4px] w-[18px]">
                <svg width="18" height="8" viewBox="0 0 18 8" fill="none" stroke="#888"><path d="M0 4h17M13 .5L17 4l-4 3.5" /></svg>
              </ToolBtn>
              <ToolBtn w="ml-[9px] w-[10px]"><span className="h-[19px] w-[2px] bg-[#333]" /></ToolBtn>
              <ToolBtn w="ml-[3px] w-[20px]"><span className="h-[2px] w-[19px] bg-[#333]" /></ToolBtn>
              <ToolBtn w="ml-[6px] w-[17px]"><span className="h-[13px] w-[16px] border border-[#999]" /></ToolBtn>
              <ToolBtn w="ml-[6px] w-[15px]"><span className="text-[11px] font-bold text-[#333]">Aa</span></ToolBtn>
              <ToolBtn w="ml-[8px] w-[16px]"><Gauge size={16} strokeWidth={1.3} color="#333" /></ToolBtn>
              <Sep />
              <ToolBtn w="ml-[5px] w-[16px]"><Mouse size={16} strokeWidth={1.1} color="#666" className="rotate-[30deg]" /></ToolBtn>
              <ToolBtn w="ml-[3px] w-[10px]"><Caret /></ToolBtn>
              <ToolBtn w="ml-[7px] w-[16px]"><Save size={16} strokeWidth={1.8} color="#222" /></ToolBtn>
              <ToolBtn w="ml-[6px] w-[10px]"><Caret /></ToolBtn>
              <ToolBtn w="ml-[7px] w-[16px]"><Share2 size={15} strokeWidth={1.2} color="#333" /></ToolBtn>
              <ToolBtn w="ml-[5px] w-[10px]"><Caret /></ToolBtn>
              <Corner cls="mb-[2px] ml-[9px]" />
            </div>

            {/* price pane */}
            <div className="relative h-[390px] shrink-0 bg-linear-to-b from-white from-55% to-[#dde6f1]">
              <MainChart />
              <div className="absolute top-[30px] left-[30px] font-semibold tracking-normal text-[#333]">
                <div className="flex h-[22px] items-center">
                  <LegendBox />
                  <span className="ml-[3px]"><Gear size={14} /></span>
                  <LegendX />
                  <span className="ml-[18px] whitespace-pre">
                    BTC/ETH@PLNX (00:05:00)  21.06.2018 23:40:00 UTC+03:00 O:<span className="text-[#008000]">,0784</span> H:<span className="text-[#008000]">,0784</span> L:<span className="text-[#008000]">,0782</span> C:<span className="text-[#008000]">,0782</span>
                  </span>
                </div>
                <div className="flex h-[22px] items-center">
                  <LegendBox />
                  <span className="ml-[4px]"><Gear size={14} /></span>
                  <span className="ml-[1px] flex"><LegendX /></span>
                  <span className="ml-[3px] h-[10px] w-[10px] bg-[#ff0000]" />
                  <span className="ml-[6px] whitespace-pre">Средняя линия  ,0781</span>
                </div>
                <div className="flex h-[22px] items-center">
                  <LegendBox />
                  <span className="ml-[4px]"><Gear size={14} /></span>
                  <span className="ml-[1px] flex"><LegendX /></span>
                  <span className="ml-[3px] h-[10px] w-[10px] bg-[#0000ff]" />
                  <span className="ml-[6px] whitespace-pre">Диапазон  ,0773 - ,0789</span>
                </div>
              </div>
            </div>

            <div className="h-[3px] shrink-0 border-y border-white bg-[#9a9a9a]" />

            {/* volume pane */}
            <div className="relative h-[154px] shrink-0 bg-linear-to-b from-white from-50% to-[#dde6f1]">
              <VolumeChart />
              <div className="absolute top-[30px] left-[30px] font-semibold tracking-normal text-[#333]">
                <div className="flex h-[22px] items-center">
                  <LegendBox />
                  <span className="ml-[3px]"><Gear size={14} /></span>
                  <LegendX />
                  <span className="ml-[2px] h-[10px] w-[10px] bg-[#008000]" />
                  <span className="ml-[10px]">41,575</span>
                </div>
                <div className="flex h-[22px] items-center">
                  <LegendBox />
                  <span className="ml-[5px]"><Gear size={14} /></span>
                  <span className="ml-[1px] flex"><LegendX /></span>
                  <span className="ml-[3px] h-[10px] w-[10px] bg-[#ff0000]" />
                </div>
              </div>
              <div className="absolute top-[4px] left-[821px] flex w-[34px] flex-col border border-[#cccedb] bg-[#f5f5f8]">
                <span className="flex h-[15px] items-center justify-center border-b border-[#cccedb]"><Pin /></span>
                <span className="flex h-[15px] items-center justify-center"><X size={13} strokeWidth={2} color="#333" /></span>
              </div>
            </div>
          </div>
        </div>

        <div className="ml-[4px] flex w-[552px] shrink-0 flex-col pt-[3px]">
          <div className="flex bg-[#f5f5f8]">
            <BookPanel />
            <BuySellPanel />
          </div>
          <div className="bg-[#f5f5f8]"><InstrumentsPanel /></div>
        </div>
      </div>

      {/* log strip + status */}
      <div className="flex h-[31px] shrink-0 flex-col bg-[#eeeef2] pl-[3px]">
        <span className="mt-[6px] leading-[16px]">Логи</span>
        <span className="mt-auto h-[6px] w-[27px] bg-[#cccedb]" />
      </div>
      <div className="flex h-[29px] shrink-0 items-center bg-[#007acc] pr-[4px] pl-[4px]">
        <span className="flex h-[21px] w-[40px] items-center justify-center bg-[#f5f5f8]">
          <span className="flex h-[18px] w-[18px] items-center justify-center rounded-full border border-[#222]"><ChevronLeft size={13} strokeWidth={1.4} /></span>
        </span>
        <span className="ml-[5px] flex h-[21px] w-[40px] items-center justify-center bg-[#f5f5f8]">
          <span className="flex h-[18px] w-[18px] items-center justify-center rounded-full border border-[#222]"><ChevronRight size={13} strokeWidth={1.4} /></span>
        </span>
        <span className="ml-[6px] text-[18px] tracking-[0.35px] text-[#ff9a2e]">ТехПоддержка от S# команды</span>
        <span className="ml-auto flex h-[21px] w-[38px] items-center justify-center bg-[#f5f5f8]"><Mail size={17} strokeWidth={1.2} color="#333" /></span>
      </div>
    </div>
  );
}
